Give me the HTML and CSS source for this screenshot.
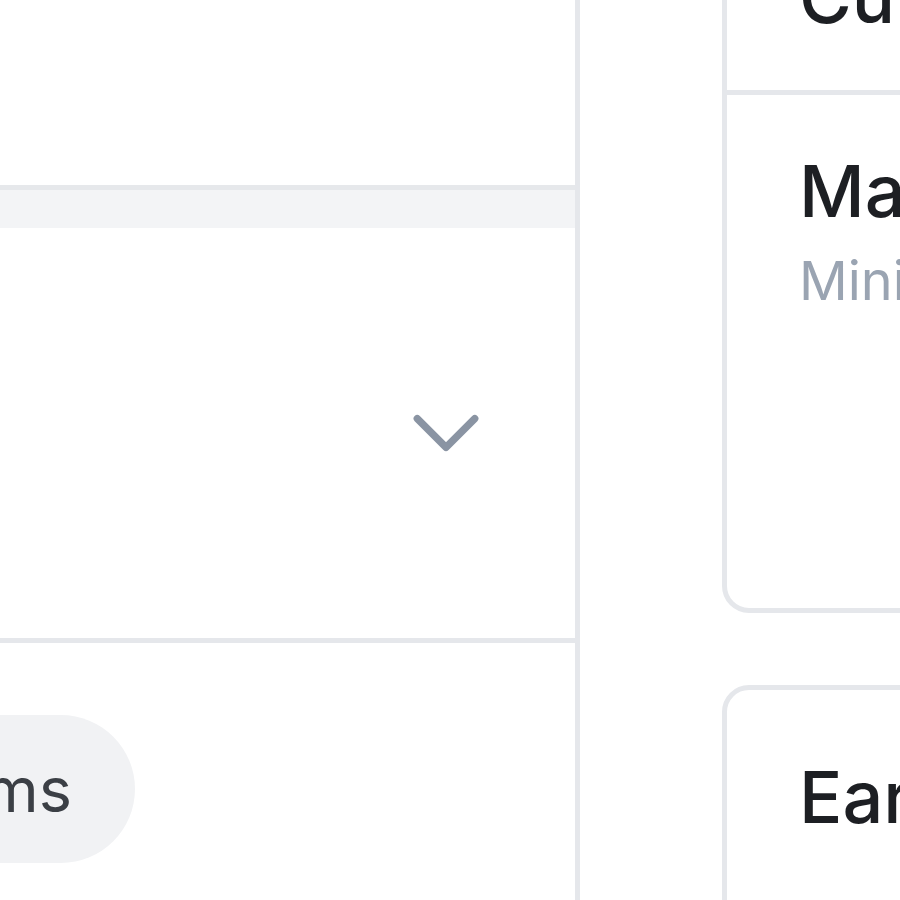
FILE: index.html
```html
<!DOCTYPE html>
<html lang="en">
<head>
    <meta charset="UTF-8">
    <meta name="viewport" content="width=device-width, initial-scale=1.0">
    <title>Order overview</title>
    <link rel="stylesheet" href="styles.css">
</head>
<body>
    <div class="layout">
        <!-- Main column -->
        <div class="main">
            <div class="summary"></div>
            <div class="band"></div>
            <div class="accordion-row">
                <span class="row-label">Shipping</span>
                <svg class="chevron" viewBox="0 0 24 24" fill="none" stroke="currentColor" stroke-width="1.9">
                    <path stroke-linecap="round" stroke-linejoin="round" d="m19.5 8.25-7.5 7.5-7.5-7.5"/>
                </svg>
            </div>
            <div class="actions">
                <div class="actions-inner">
                    <button class="pill">View all items</button>
                </div>
            </div>
        </div>

        <!-- Sidebar -->
        <div class="sidebar">
            <div class="card">
                <div class="card-head">
                    <h2 class="card-title">Current plan</h2>
                </div>
                <div class="card-body tall">
                    <h3 class="card-title">Max storage</h3>
                    <p class="card-sub">Minimum term 12 months</p>
                </div>
            </div>
            <div class="card">
                <div class="card-head plain">
                    <h2 class="card-title">Earnings</h2>
                </div>
            </div>
        </div>
    </div>
</body>
</html>
```

FILE: styles.css
```css
* {
    box-sizing: border-box;
}
body {
    margin: 0;
    background: #fff;
    color: #1d1f23;
    font-family: Inter, "Liberation Sans", sans-serif;
    overflow: hidden;
    height: 900px;
}
.layout {
    display: flex;
    gap: 142px;
    margin-top: -113px;
    margin-left: -600px;
}
.main {
    width: 1180px;
    flex-shrink: 0;
    border-right: 5px solid #e5e7eb;
}
.summary {
    height: 298px;
}
.band {
    height: 43px;
    background: #f3f4f6;
    border-top: 5px solid #e6e8eb;
}
.accordion-row {
    height: 415px;
    display: flex;
    align-items: center;
    justify-content: space-between;
    padding: 0 83px 0 72px;
    border-bottom: 5px solid #e5e7eb;
}
.row-label {
    font-size: 72px;
}
.chevron {
    width: 92px;
    height: 92px;
    color: #8a94a3;
}
.actions {
    padding-top: 72px;
    height: 400px;
}
.actions-inner {
    width: 735px;
    display: flex;
    justify-content: flex-end;
}
.pill {
    font-family: inherit;
    font-size: 63px;
    line-height: 90px;
    color: #3b3f45;
    background: #f1f2f4;
    border: none;
    border-radius: 999px;
    padding: 29px 63px;
}
.sidebar {
    width: 900px;
    flex-shrink: 0;
    display: flex;
    flex-direction: column;
    gap: 72px;
}
.card {
    border: 5px solid #e5e7eb;
    border-radius: 27px;
}
.card-head {
    padding: 51px 72px 39px;
    border-bottom: 5px solid #e5e7eb;
}
.card-head.plain {
    padding-top: 53px;
    border-bottom: none;
    height: 400px;
}
.card-title {
    margin: 0;
    font-size: 72px;
    line-height: 108px;
    font-weight: 500;
    white-space: nowrap;
}
.card-body {
    padding: 42px 72px 0;
}
.card-body.tall {
    height: 513px;
}
.card-sub {
    margin: 0;
    font-size: 54px;
    line-height: 72px;
    color: #9aa4b2;
    white-space: nowrap;
}
```
